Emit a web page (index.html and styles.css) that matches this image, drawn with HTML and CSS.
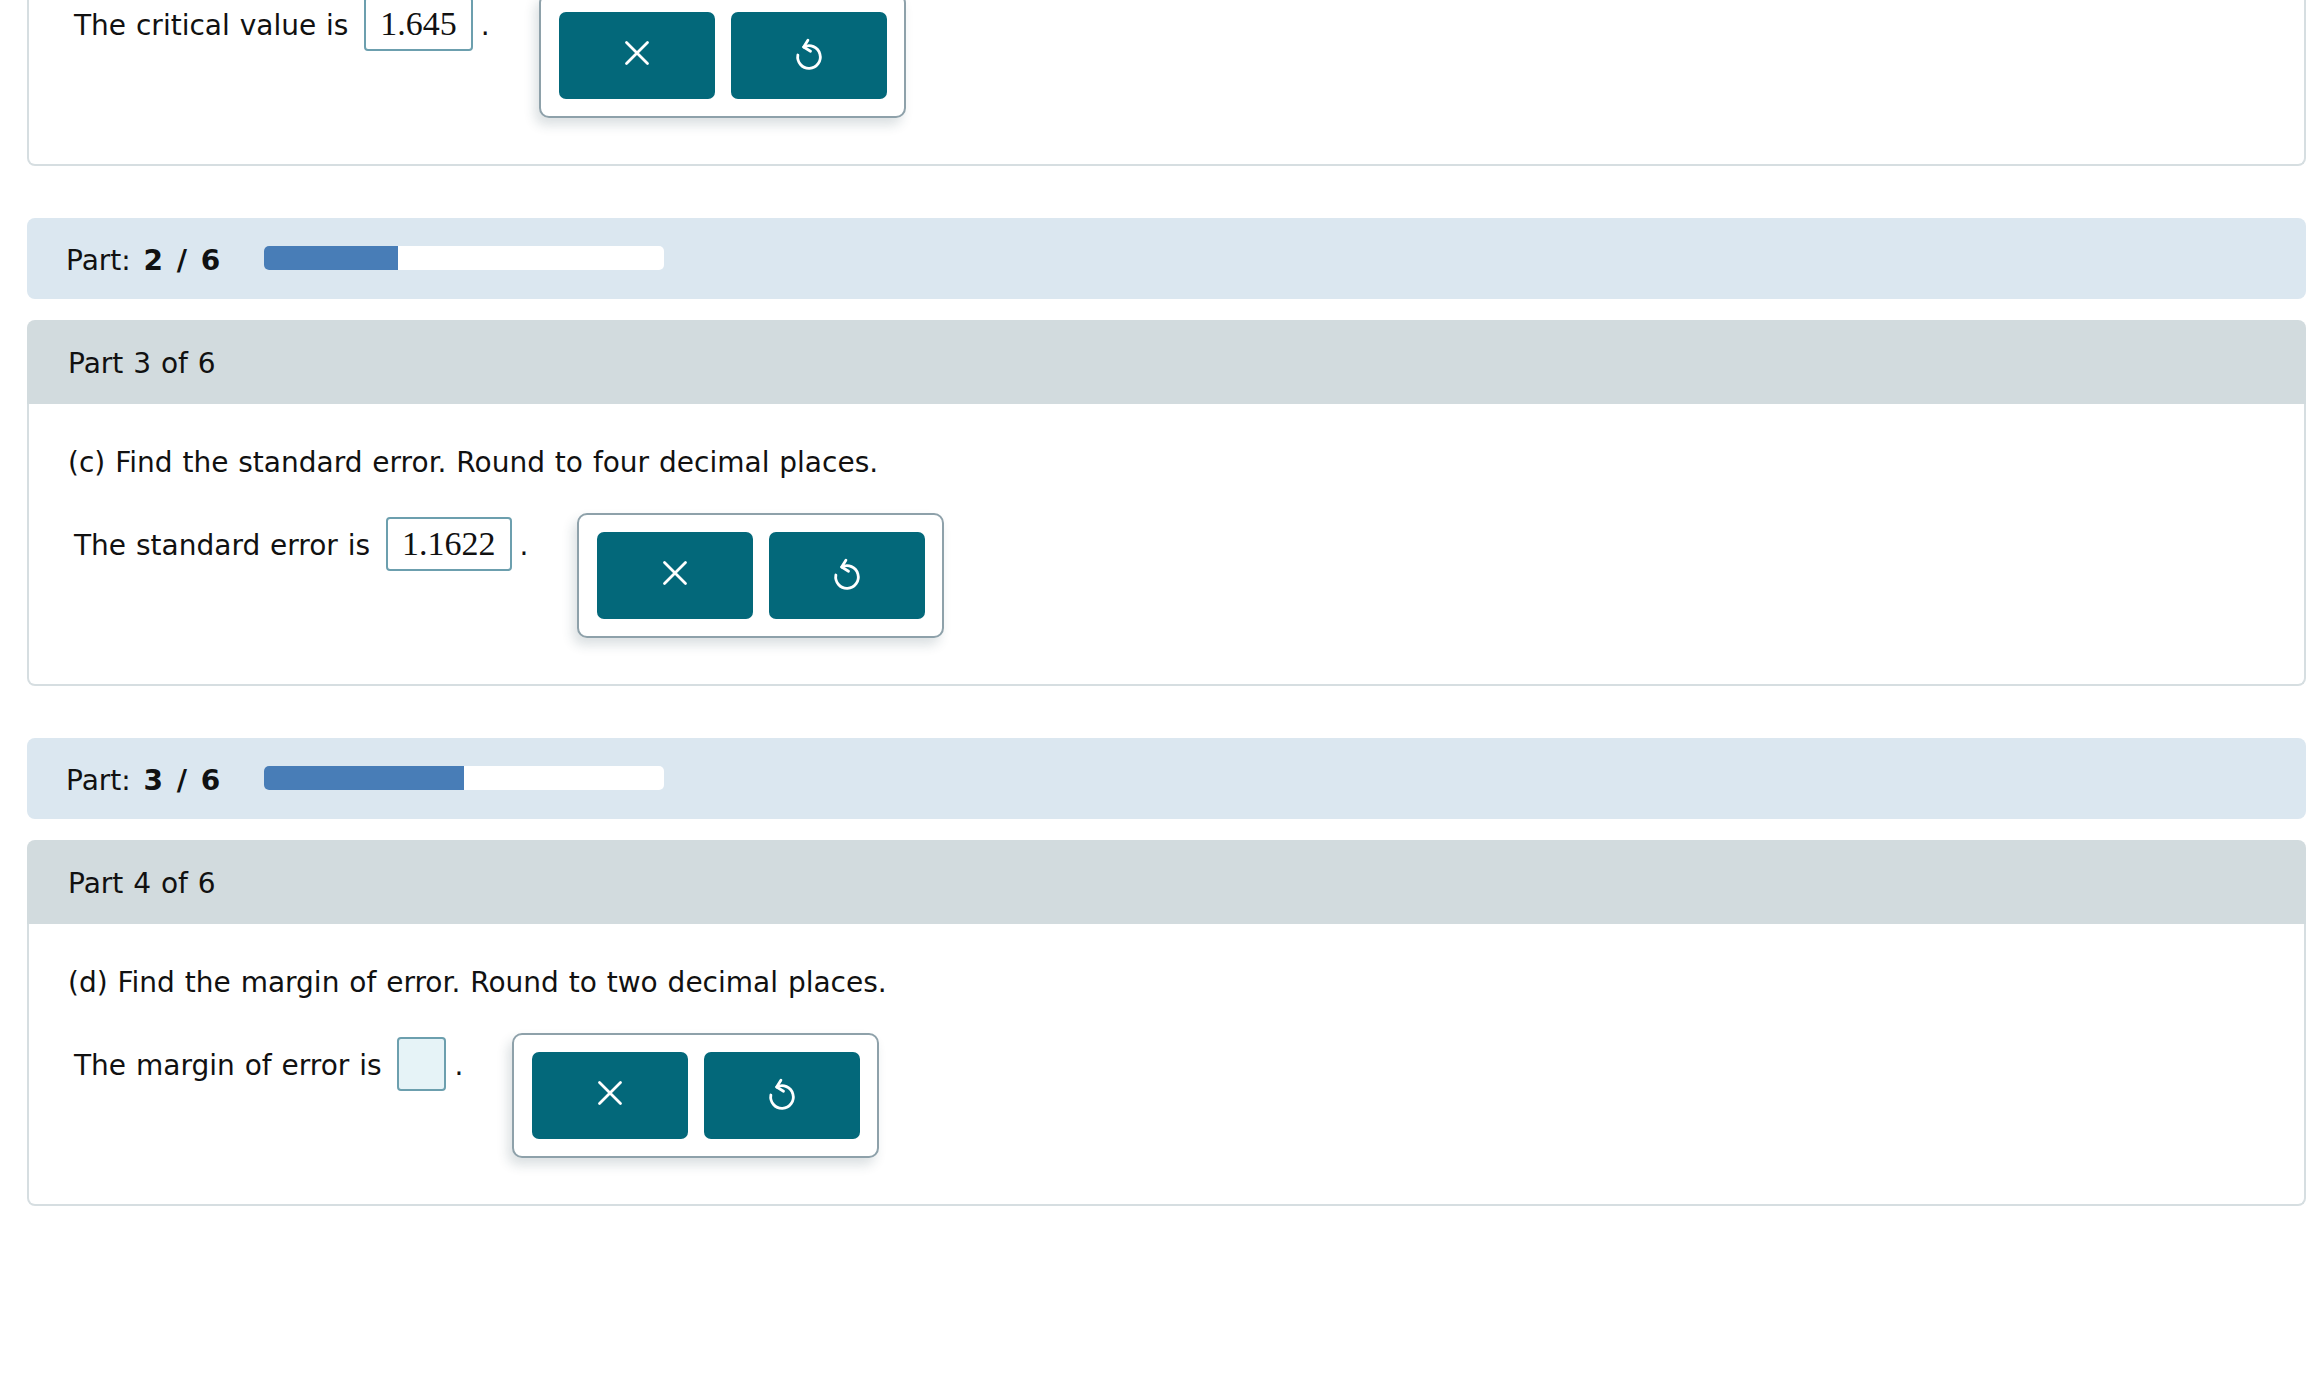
FILE: index.html
```html
<!DOCTYPE html>
<html lang="en">
<head>
<meta charset="utf-8">
<title>Parts</title>
<link rel="stylesheet" href="styles.css">
</head>
<body>
<div class="page">

  <section class="card card--tail">
    <div class="card-body card-body--tail">
      <div class="answer-row">
        <div class="expr">The critical value is <span class="ans">1.645</span>.</div>
        <div class="palette">
          <button class="pbtn" type="button" aria-label="Clear">
            <svg class="ico-x" width="26" height="26" viewBox="0 0 26 26"><path d="M2.5 2.5L23.5 23.5M23.5 2.5L2.5 23.5"/></svg>
          </button>
          <button class="pbtn" type="button" aria-label="Undo">
            <svg class="ico-undo" width="30" height="34" viewBox="0 0 30 34"><path d="M3.87 19.04A11.3 11.3 0 1 0 9.7 11.02"/><path d="M13.9 4.2L9.7 11.02L16.5 15.2"/></svg>
          </button>
        </div>
      </div>
    </div>
  </section>

  <div class="progress">
    <span class="progress-label">Part: <b>2 / 6</b></span>
    <div class="bar"><div class="bar-fill" style="width:33.333%"></div></div>
  </div>

  <section class="card">
    <header class="card-head">Part 3 of 6</header>
    <div class="card-body">
      <p class="question">(c) Find the standard error. Round to four decimal places.</p>
      <div class="answer-row">
        <div class="expr">The standard error is <span class="ans">1.1622</span>.</div>
        <div class="palette">
          <button class="pbtn" type="button" aria-label="Clear">
            <svg class="ico-x" width="26" height="26" viewBox="0 0 26 26"><path d="M2.5 2.5L23.5 23.5M23.5 2.5L2.5 23.5"/></svg>
          </button>
          <button class="pbtn" type="button" aria-label="Undo">
            <svg class="ico-undo" width="30" height="34" viewBox="0 0 30 34"><path d="M3.87 19.04A11.3 11.3 0 1 0 9.7 11.02"/><path d="M13.9 4.2L9.7 11.02L16.5 15.2"/></svg>
          </button>
        </div>
      </div>
    </div>
  </section>

  <div class="progress">
    <span class="progress-label">Part: <b>3 / 6</b></span>
    <div class="bar"><div class="bar-fill" style="width:50%"></div></div>
  </div>

  <section class="card">
    <header class="card-head">Part 4 of 6</header>
    <div class="card-body">
      <p class="question">(d) Find the margin of error. Round to two decimal places.</p>
      <div class="answer-row">
        <div class="expr">The margin of error is <span class="ans ans--empty">&nbsp;</span>.</div>
        <div class="palette">
          <button class="pbtn" type="button" aria-label="Clear">
            <svg class="ico-x" width="26" height="26" viewBox="0 0 26 26"><path d="M2.5 2.5L23.5 23.5M23.5 2.5L2.5 23.5"/></svg>
          </button>
          <button class="pbtn" type="button" aria-label="Undo">
            <svg class="ico-undo" width="30" height="34" viewBox="0 0 30 34"><path d="M3.87 19.04A11.3 11.3 0 1 0 9.7 11.02"/><path d="M13.9 4.2L9.7 11.02L16.5 15.2"/></svg>
          </button>
        </div>
      </div>
    </div>
  </section>

</div>
</body>
</html>
```

FILE: styles.css
```css
html, body {
  margin: 0;
  background: #ffffff;
}

body {
  font-family: "DejaVu Sans", Verdana, sans-serif;
  font-size: 28px;
  word-spacing: 1px;
  color: #111111;
}

.page {
  display: flex;
  flex-direction: column;
  padding: 0 18px 0 27px;
}

.card {
  border-radius: 8px;
}

.card--tail {
  margin-top: -7px;
}

.card-head {
  box-sizing: border-box;
  height: 84px;
  padding: 23px 41px 0;
  line-height: 42px;
  background: #d2dbde;
  border-radius: 8px 8px 0 0;
}

.card-body {
  border: 2px solid #d6dee1;
  border-top: none;
  border-radius: 0 0 8px 8px;
  padding: 38px 36px 46px 39px;
}

.card-body--tail {
  padding-top: 0;
}

.question {
  margin: 0;
  line-height: 42px;
}

.answer-row {
  display: flex;
  align-items: flex-start;
  margin-top: 29px;
  padding-left: 6px;
}

.card-body--tail .answer-row {
  margin-top: 0;
}

.expr {
  margin-top: 4px;
  line-height: 42px;
  white-space: nowrap;
}

.ans {
  display: inline-block;
  box-sizing: border-box;
  height: 54px;
  margin: 0 8px 0 6px;
  padding: 0 14px;
  border: 2px solid #6c9fae;
  border-radius: 4px;
  font-family: "Liberation Serif", "Times New Roman", serif;
  font-size: 34px;
  line-height: 50px;
  word-spacing: 0;
  color: #111111;
}

.ans--empty {
  width: 49px;
  padding: 0;
  background: #e6f3f7;
}

.palette {
  display: flex;
  gap: 16px;
  margin-left: 49px;
  padding: 17px 17px 17px 18px;
  border: 2px solid #8ea1aa;
  border-radius: 10px;
  background: #ffffff;
  box-shadow: -4px 7px 12px rgba(30, 60, 75, 0.16);
}

.pbtn {
  display: flex;
  align-items: center;
  justify-content: center;
  width: 156px;
  height: 87px;
  padding: 0 0 6px;
  border: none;
  border-radius: 7px;
  background: #03687a;
}

.pbtn svg {
  display: block;
  fill: none;
  stroke: #ffffff;
  stroke-width: 2.8;
  stroke-linecap: round;
  stroke-linejoin: round;
}

.progress {
  box-sizing: border-box;
  display: flex;
  align-items: flex-start;
  height: 81px;
  margin-top: 52px;
  padding: 22px 39px 0;
  background: #dbe7f0;
  border-radius: 8px;
}

.progress + .card {
  margin-top: 21px;
}

.progress-label {
  line-height: 42px;
  white-space: nowrap;
}

.progress-label b {
  margin-left: 3px;
  word-spacing: 4px;
}

.bar {
  width: 400px;
  height: 24px;
  margin: 6px 0 0 44px;
  background: #ffffff;
  border-radius: 5px;
  overflow: hidden;
}

.bar-fill {
  height: 100%;
  background: #487db7;
}
```
